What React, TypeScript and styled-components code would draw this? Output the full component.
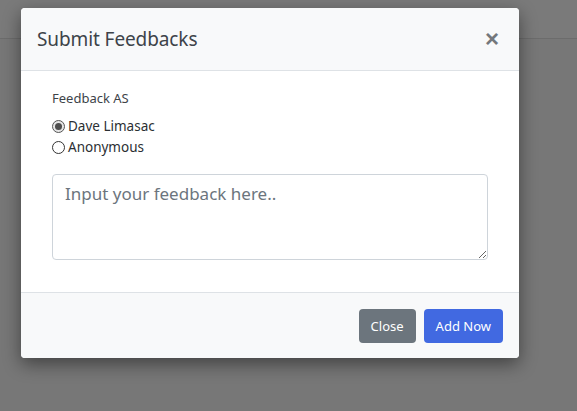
import React from "react";
import styled, { createGlobalStyle } from "styled-components";

const GlobalStyle = createGlobalStyle`
	html, body {
		margin: 0;
		padding: 0;
	}
	body {
		font-family: "Noto Sans", "Open Sans", sans-serif;
		color: #212529;
	}
`;

const Backdrop = styled.div`
	width: 577px;
	height: 411px;
	background-color: #777777;
	overflow: hidden;
	display: flex;
	flex-direction: column;
`;

const PageBar = styled.div`
	height: 38px;
	flex: 0 0 38px;
	background-color: #7a7a7a;
	border-bottom: 1px solid #6c6c6c;
`;

const Stage = styled.div`
	flex: 1;
	margin-top: -31px;
	padding-left: 21px;
`;

const Modal = styled.div`
	width: 498px;
	background: #ffffff;
	border-radius: 4px;
	box-shadow: 0 6px 18px rgba(0, 0, 0, 0.45);
	display: flex;
	flex-direction: column;
`;

const Header = styled.div`
	height: 62px;
	display: flex;
	align-items: center;
	justify-content: space-between;
	padding: 0 20px 0 16px;
	background: #f8f9fa;
	border-bottom: 1px solid #dee2e6;
	border-radius: 4px 4px 0 0;
`;

const Title = styled.h5`
	margin: 0;
	font-size: 19px;
	font-weight: 400;
	color: #3d4349;
	letter-spacing: -0.1px;
`;

const CloseX = styled.button`
	border: none;
	background: none;
	padding: 0;
	font-size: 24px;
	font-weight: 700;
	color: #74787c;
	line-height: 1;
	cursor: pointer;
	font-family: "Liberation Sans", Arial, sans-serif;
`;

const Body = styled.div`
	padding: 17px 31px 32px;
	display: flex;
	flex-direction: column;
`;

const Label = styled.div`
	font-size: 13px;
	color: #3d4349;
	line-height: 20px;
	margin-bottom: 8px;
`;

const RadioRow = styled.label`
	display: flex;
	align-items: center;
	gap: 3px;
	font-size: 13.5px;
	line-height: 21px;
	color: #2b2f33;
`;

const Radio = styled.input.attrs({ type: "radio" })`
	appearance: none;
	margin: 0;
	width: 13px;
	height: 13px;
	border-radius: 50%;
	border: 1px solid #333;
	background: #fff;
	display: grid;
	place-content: center;
	&:checked {
		border-color: #555;
		background: #e5e5e5;
	}
	&:checked::before {
		content: "";
		width: 7px;
		height: 7px;
		border-radius: 50%;
		background: #4d4d4d;
	}
`;

const TextArea = styled.textarea`
	margin-top: 16px;
	height: 86px;
	box-sizing: border-box;
	padding: 7px 12px;
	font-family: inherit;
	font-size: 17px;
	border: 1px solid #ced4da;
	border-radius: 4px;
	resize: vertical;
	&::placeholder {
		color: #6c757d;
	}
`;

const Footer = styled.div`
	height: 66px;
	box-sizing: border-box;
	display: flex;
	justify-content: flex-end;
	align-items: center;
	gap: 8px;
	padding: 0 16px;
	background: #f8f9fa;
	border-top: 1px solid #dee2e6;
	border-radius: 0 0 4px 4px;
`;

const Button = styled.button<{ $variant: "secondary" | "primary" }>`
	height: 34px;
	padding: 0 12px;
	border: none;
	border-radius: 4px;
	font-family: inherit;
	font-size: 13px;
	color: #fff;
	background: ${(p) => (p.$variant === "primary" ? "#4169e1" : "#6c757d")};
	cursor: pointer;
`;

export default function App() {
	return (
		<>
			<GlobalStyle />
			<Backdrop>
				<PageBar />
				<Stage>
					<Modal>
						<Header>
							<Title>Submit Feedbacks</Title>
							<CloseX>×</CloseX>
						</Header>
						<Body>
							<Label>Feedback AS</Label>
							<RadioRow>
								<Radio name="as" defaultChecked />
								Dave Limasac
							</RadioRow>
							<RadioRow>
								<Radio name="as" />
								Anonymous
							</RadioRow>
							<TextArea placeholder="Input your feedback here.." />
						</Body>
						<Footer>
							<Button $variant="secondary">Close</Button>
							<Button $variant="primary">Add Now</Button>
						</Footer>
					</Modal>
				</Stage>
			</Backdrop>
		</>
	);
}
